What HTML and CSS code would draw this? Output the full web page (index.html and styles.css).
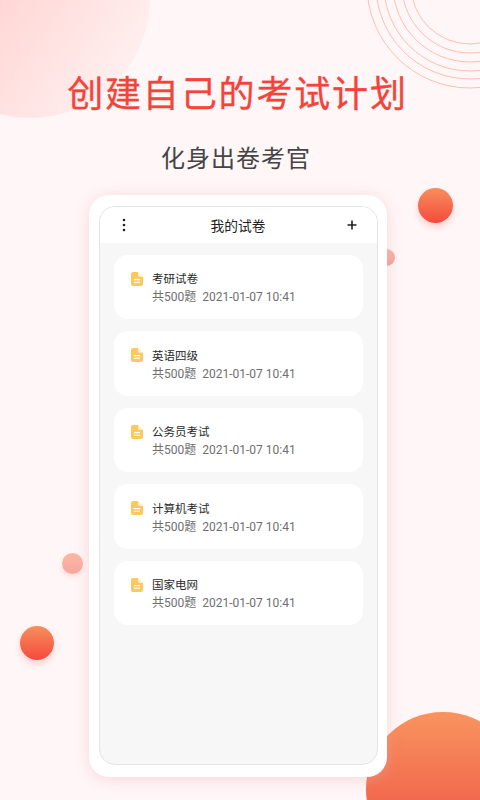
FILE: index.html
```html
<!DOCTYPE html>
<html lang="zh-CN">
<head>
<meta charset="utf-8">
<title>创建自己的考试计划</title>
<link rel="stylesheet" href="styles.css">
</head>
<body>
<div class="screen">
  <div class="blob blob-top"></div>
  <svg class="rings" width="120" height="100" viewBox="360 0 120 100" fill="none" stroke="#fbb9a8" stroke-width="0.9">
    <circle cx="470" cy="-15" r="59"/>
    <circle cx="470" cy="-15" r="68"/>
    <circle cx="470" cy="-15" r="77"/>
    <circle cx="470" cy="-15" r="86"/>
    <circle cx="470" cy="-15" r="94"/>
    <circle cx="470" cy="-15" r="103"/>
  </svg>
  <div class="blob blob-bottom"></div>
  <div class="dot dot-a"></div>
  <div class="dot dot-b"></div>
  <div class="dot dot-c"></div>
  <div class="dot dot-d"></div>

  <h1 class="title">创建自己的考试计划</h1>
  <h2 class="subtitle">化身出卷考官</h2>

  <div class="device">
    <div class="panel">
      <header class="bar">
        <svg class="bar-icon" width="14" height="14" viewBox="0 0 14 14" fill="#222"><circle cx="7" cy="2" r="1.3"/><circle cx="7" cy="7" r="1.3"/><circle cx="7" cy="12" r="1.3"/></svg>
        <span class="bar-title">我的试卷</span>
        <svg class="bar-icon" width="14" height="14" viewBox="0 0 14 14" stroke="#222" stroke-width="1.6" fill="none"><path d="M7 2.5v9M2.5 7h9"/></svg>
      </header>
      <main class="list">
        <article class="item">
          <svg class="doc" width="12" height="14" viewBox="0 0 12 14"><path d="M2 0h5l5 5v7a2 2 0 0 1-2 2H2a2 2 0 0 1-2-2V2a2 2 0 0 1 2-2z" fill="#fdc95f"/><path d="M7.2 0v3.4a1.4 1.4 0 0 0 1.4 1.4H12z" fill="#fff" opacity=".75"/><path d="M3 7.6h6M3 10.2h6" stroke="#fff" stroke-width="1.1"/></svg>
          <div class="text"><div class="name">考研试卷</div><div class="meta">共500题&nbsp; 2021-01-07 10:41</div></div>
        </article>
        <article class="item">
          <svg class="doc" width="12" height="14" viewBox="0 0 12 14"><path d="M2 0h5l5 5v7a2 2 0 0 1-2 2H2a2 2 0 0 1-2-2V2a2 2 0 0 1 2-2z" fill="#fdc95f"/><path d="M7.2 0v3.4a1.4 1.4 0 0 0 1.4 1.4H12z" fill="#fff" opacity=".75"/><path d="M3 7.6h6M3 10.2h6" stroke="#fff" stroke-width="1.1"/></svg>
          <div class="text"><div class="name">英语四级</div><div class="meta">共500题&nbsp; 2021-01-07 10:41</div></div>
        </article>
        <article class="item">
          <svg class="doc" width="12" height="14" viewBox="0 0 12 14"><path d="M2 0h5l5 5v7a2 2 0 0 1-2 2H2a2 2 0 0 1-2-2V2a2 2 0 0 1 2-2z" fill="#fdc95f"/><path d="M7.2 0v3.4a1.4 1.4 0 0 0 1.4 1.4H12z" fill="#fff" opacity=".75"/><path d="M3 7.6h6M3 10.2h6" stroke="#fff" stroke-width="1.1"/></svg>
          <div class="text"><div class="name">公务员考试</div><div class="meta">共500题&nbsp; 2021-01-07 10:41</div></div>
        </article>
        <article class="item">
          <svg class="doc" width="12" height="14" viewBox="0 0 12 14"><path d="M2 0h5l5 5v7a2 2 0 0 1-2 2H2a2 2 0 0 1-2-2V2a2 2 0 0 1 2-2z" fill="#fdc95f"/><path d="M7.2 0v3.4a1.4 1.4 0 0 0 1.4 1.4H12z" fill="#fff" opacity=".75"/><path d="M3 7.6h6M3 10.2h6" stroke="#fff" stroke-width="1.1"/></svg>
          <div class="text"><div class="name">计算机考试</div><div class="meta">共500题&nbsp; 2021-01-07 10:41</div></div>
        </article>
        <article class="item">
          <svg class="doc" width="12" height="14" viewBox="0 0 12 14"><path d="M2 0h5l5 5v7a2 2 0 0 1-2 2H2a2 2 0 0 1-2-2V2a2 2 0 0 1 2-2z" fill="#fdc95f"/><path d="M7.2 0v3.4a1.4 1.4 0 0 0 1.4 1.4H12z" fill="#fff" opacity=".75"/><path d="M3 7.6h6M3 10.2h6" stroke="#fff" stroke-width="1.1"/></svg>
          <div class="text"><div class="name">国家电网</div><div class="meta">共500题&nbsp; 2021-01-07 10:41</div></div>
        </article>
      </main>
    </div>
  </div>
</div>
</body>
</html>
```

FILE: styles.css
```css
* { box-sizing: border-box; }
html, body { margin: 0; padding: 0; }
body { font-family: "Noto Sans CJK SC", "Noto Sans", sans-serif; }

.screen {
  position: relative;
  width: 480px;
  height: 800px;
  overflow: hidden;
  background: #fff6f7;
  display: flex;
  flex-direction: column;
  align-items: center;
  padding-top: 65px;
}

.blob, .rings, .dot { position: absolute; }
.blob { border-radius: 50%; }
.blob-top {
  left: -90px; top: -122px;
  width: 240px; height: 240px;
  background: linear-gradient(125deg, #ffc5c1 10%, #ffeeee 85%);
}
.blob-bottom {
  left: 366px; top: 712px;
  width: 154px; height: 154px;
  background: linear-gradient(180deg, #f8945e, #f1604a 70%);
}
.rings { left: 360px; top: 0; }

.dot { border-radius: 50%; }
.dot-a {
  left: 418px; top: 188px; width: 35px; height: 35px;
  background: linear-gradient(180deg, #f88e5c, #f44a3d);
  box-shadow: 0 4px 6px rgba(244, 74, 61, .22);
}
.dot-b {
  left: 20px; top: 626px; width: 34px; height: 34px;
  background: linear-gradient(180deg, #f88e5c, #f44a3d);
  box-shadow: 0 4px 6px rgba(244, 74, 61, .22);
}
.dot-c {
  left: 62px; top: 553px; width: 21px; height: 21px;
  background: linear-gradient(180deg, #fdb9a4, #f9a5a0);
  box-shadow: 0 3px 5px rgba(244, 120, 110, .2);
}
.dot-d {
  left: 378px; top: 249px; width: 17px; height: 17px;
  background: linear-gradient(180deg, #f9b8a6, #f59f97);
}

.title, .subtitle, .device { position: relative; }
.title {
  margin: 0 5px 0 0;
  font-size: 36px;
  line-height: 52px;
  font-weight: 400;
  letter-spacing: 1.85px;
  color: #f3443a;
  -webkit-text-stroke: .3px #f3443a;
}
.subtitle {
  margin: 22px 8px 0 0;
  font-size: 24px;
  line-height: 36px;
  font-weight: 400;
  letter-spacing: 1px;
  color: #454545;
}

.device {
  margin: 20px 4px 0 0;
  width: 298px;
  height: 582px;
  padding: 11px 9px 12px 10px;
  background: #fff;
  border-radius: 20px;
  box-shadow: 0 2px 14px rgba(235, 170, 175, .42);
}
.panel {
  height: 100%;
  background: #f7f7f7;
  border: 1px solid #e4e4e4;
  border-radius: 16px;
  overflow: hidden;
}
.bar {
  height: 35.5px;
  background: #fff;
  display: flex;
  align-items: center;
  justify-content: space-between;
  padding: 0 18px 0 17px;
}
.bar-title { font-size: 13.75px; color: #222; }

.list {
  padding: 12px 14px 0;
  display: flex;
  flex-direction: column;
  gap: 12px;
}
.item {
  height: 64.5px;
  background: #fff;
  border-radius: 14px;
  display: flex;
  align-items: flex-start;
  padding: 15.5px 0 0 17px;
  gap: 9px;
}
.doc { margin-top: 1.5px; flex: none; }
.name { font-size: 11.5px; line-height: 16px; color: #2a2a2a; }
.meta { font-size: 12px; line-height: 18px; margin-top: 2px; color: #6f6f6f; font-family: "Roboto", "Noto Sans CJK SC", sans-serif; }
```
